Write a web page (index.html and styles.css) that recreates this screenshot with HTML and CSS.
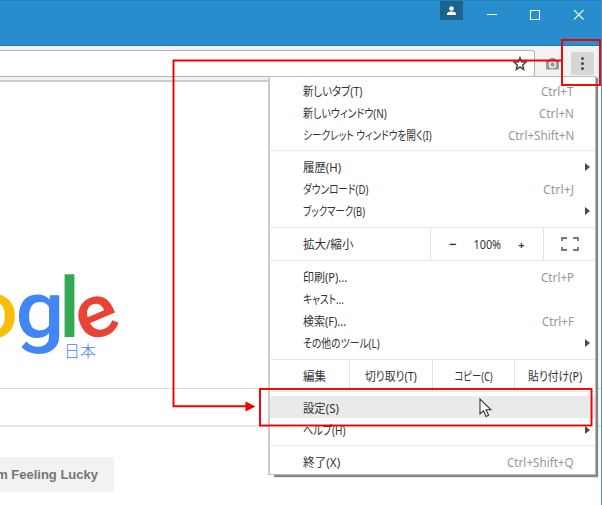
FILE: index.html
```html
<!DOCTYPE html>
<html lang="ja">
<head>
<meta charset="utf-8">
<title>Google</title>
<link rel="stylesheet" href="styles.css">
</head>
<body>
<div class="window">
  <header class="titlebar">
    <div class="user"><svg width="23" height="20"><circle cx="11.5" cy="7.5" r="2.3"/><path d="M7 14v-1.4c0-1.5 2-2.2 4.5-2.2s4.500.7 4.500 2.200V14z"/></svg></div>
    <svg class="controls" width="102" height="28"><path d="M4 14.500h10M47.500 10.500h9v9h-9zM91 10l9.500 9.500M100.500 10L91 19.500"/></svg>
  </header>
  <div class="toolbar">
    <div class="omnibox"><svg width="16" height="16" viewBox="0 0 16 16"><path d="M8 1.800l1.650 4.050 4.350.35-3.300 2.850 1 4.250L8 11l-3.700 2.300 1-4.250L2 6.200l4.350-.35z"/></svg></div>
    <svg class="camera" width="16" height="14"><path d="M1 3h3l1.500-2h4L11 3h3v9.500H1z" fill="#979797"/><circle cx="7.500" cy="7.500" r="3" fill="none" stroke="#f2f2f2" stroke-width="1.600"/></svg>
    <div class="more"><i></i><i></i><i></i></div>
  </div>
  <main class="page">
    <svg class="logo" width="140" height="100">
      <text x="-30" y="67" fill="#fbbc05" textLength="48" lengthAdjust="spacingAndGlyphs">o</text>
      <text x="15.500" y="67" fill="#4285f4" textLength="49" lengthAdjust="spacingAndGlyphs">g</text>
      <text class="ell" x="59" y="67" fill="#34a853" textLength="21" lengthAdjust="spacingAndGlyphs">l</text>
      <text class="e" x="-21.500" y="20.500" fill="#ea4335" textLength="42" lengthAdjust="spacingAndGlyphs" transform="translate(97 46.500) rotate(-23)">e</text>
      <text class="country" x="64" y="87" fill="#4285f4">日本</text>
    </svg>
    <div class="search"></div>
    <div class="lucky">I'm Feeling Lucky</div>
  </main>
</div>

<nav class="menu">
  <div class="group">
    <div class="item"><span data-w="59">新しいタブ(T)</span><kbd data-w="33">Ctrl+T</kbd></div>
    <div class="item"><span data-w="84">新しいウィンドウ(N)</span><kbd data-w="35">Ctrl+N</kbd></div>
    <div class="item"><span data-w="129">シークレット ウィンドウを開く(I)</span><kbd data-w="66">Ctrl+Shift+N</kbd></div>
  </div>
  <div class="group">
    <div class="item sub"><span data-w="38">履歴(H)</span></div>
    <div class="item"><span data-w="65">ダウンロード(D)</span><kbd data-w="31">Ctrl+J</kbd></div>
    <div class="item sub"><span data-w="62">ブックマーク(B)</span></div>
  </div>
  <div class="strip zoom">
    <div class="name"><span data-w="50">拡大/縮小</span></div>
    <div class="level"><b>−</b><span data-w="28">100%</span><b class="plus">+</b></div>
    <div class="full"><svg width="18" height="14"><path d="M1 4V1h5M12 1h5v3M17 10v3h-5M6 13H1v-3"/></svg></div>
  </div>
  <div class="group">
    <div class="item"><span data-w="44">印刷(P)...</span><kbd data-w="33">Ctrl+P</kbd></div>
    <div class="item"><span data-w="41">キャスト...</span></div>
    <div class="item"><span data-w="43">検索(F)...</span><kbd data-w="32">Ctrl+F</kbd></div>
    <div class="item sub"><span data-w="77">その他のツール(L)</span></div>
  </div>
  <div class="strip edit">
    <div class="name"><span data-w="23">編集</span></div>
    <div><span data-w="52">切り取り(T)</span></div>
    <div><span data-w="38">コピー(C)</span></div>
    <div><span data-w="54">貼り付け(P)</span></div>
  </div>
  <div class="group lowered">
    <div class="item active"><span data-w="36">設定(S)</span></div>
    <div class="item sub"><span data-w="43">ヘルプ(H)</span></div>
  </div>
  <div class="group last">
    <div class="item"><span data-w="37">終了(X)</span><kbd data-w="67">Ctrl+Shift+Q</kbd></div>
  </div>
</nav>

<svg class="annotation" width="602" height="505">
  <rect x="562" y="40" width="38" height="45"/>
  <path d="M562 60.500H173.500V406.200H246"/>
  <rect x="260" y="389" width="331.500" height="36.500"/>
  <path class="head" d="M245.500 401.500L255.500 406.500L245.500 411.500z"/>
  <path class="cursor" d="M480 399v15l3.600-3.300 2.500 5.700 2.500-1.100-2.500-5.500h4.800z"/>
</svg>
<script src="fit.js"></script>
</body>
</html>
```
FILE: styles.css
```css
* { box-sizing: border-box; }
body { margin: 0; width: 602px; height: 505px; overflow: hidden; position: relative; background: #fff; font-family: "Noto Sans", "Noto Sans CJK JP", sans-serif; }
svg { display: block; }
.window { width: 602px; height: 505px; border-right: 1px solid #4a91c5; display: flex; flex-direction: column; overflow: hidden; }
.titlebar { height: 46px; flex: none; background: #288dcc; border-top: 1px solid #247fb8; border-bottom: 1px solid #257bb0; margin-right: -1px; display: flex; align-items: flex-start; padding-left: 440px; }
.user { width: 23px; height: 19px; background: #1c638f; }
.user svg { fill: #fff; }
.controls { margin: -1px 0 0 20px; fill: none; stroke: #e9f4fb; stroke-width: 1.1; }
.toolbar { height: 36px; flex: none; background: #f2f2f2; border-bottom: 2px solid #cdcdcd; display: flex; align-items: flex-start; padding-top: 4px; }
.omnibox { width: 535px; height: 27px; background: #fff; border: 1px solid #b3b3b3; border-left: 0; border-radius: 0 3px 3px 0; padding: 5px 6px 0 0; display: flex; justify-content: flex-end; }
.omnibox svg { fill: none; stroke: #484848; stroke-width: 1.5; }
.camera { margin: 7px 0 0 10px; }
.more { width: 23px; height: 23px; margin: 2px 0 0 10px; background: #d6d6d6; border-radius: 2px; display: flex; flex-direction: column; align-items: center; justify-content: center; gap: 2px; }
.more i { width: 3px; height: 3px; border-radius: 50%; background: #484848; }
.page { flex: 1; padding-top: 188px; }
.logo { font: 500 79px Roboto, sans-serif; }
.logo .ell { font-size: 83px; }
.logo .e { font-size: 75px; }
.logo .country { font: 300 16px "Noto Sans CJK JP", sans-serif; }
.search { height: 39px; margin-top: 18px; border-top: 1px solid #dcdcdc; border-bottom: 2px solid #e6e6e6; }
.lucky { width: 114px; height: 35px; margin-top: 30px; padding-right: 16px; background: #f2f2f2; border-radius: 0 2px 2px 0; overflow: hidden; display: flex; justify-content: flex-end; align-items: center; white-space: nowrap; color: #757575; font: bold 13px "Liberation Sans", sans-serif; }
.menu { position: absolute; left: 268px; top: 76px; width: 328px; height: 399px; background: #fff; border: 1px solid #bcbcbc; border-left: 2px solid #ccc; box-shadow: 2px 2px 1px #858585; font-size: 12px; color: #333; clip-path: polygon(0 0, 334px 0, 334px 405px, 6px 405px, 6px 399px, 0 399px); }
.menu span, .menu kbd { display: inline-block; white-space: nowrap; flex: none; font-feature-settings: "palt"; }
.group { padding: 4px 0 5px; border-bottom: 1px solid #eaeaea; }
.zoom + .group, .group + .group { padding-top: 5px; }
.menu > .group:first-child { padding: 3px 0 4px; }
.item { height: 22px; padding: 0 21px 0 33px; display: flex; align-items: center; justify-content: space-between; position: relative; }
.item > span { transform-origin: left; }
.item kbd { font-family: inherit; color: #999890; transform-origin: right; }
.item.sub { padding-right: 5px; }
.lowered .item { padding-top: 2px; }
.sub::after { content: ""; border: 4px solid transparent; border-left: 5px solid #4a4a4a; border-right: 0; }
.active { background: #eaeaea; }
.strip { height: 33px; display: grid; border-bottom: 1px solid #eaeaea; }
.strip > div { display: flex; align-items: center; justify-content: center; border-left: 1px solid #e2e2e2; min-width: 0; }
.strip .name { justify-content: flex-start; padding-left: 33px; border: 0; }
.name span { transform-origin: left; }
.zoom { grid-template-columns: 160px 113px 1fr; }
.level b { font-size: 13px; width: 12px; text-align: center; }
.level { gap: 13px; }
.level .plus { font-size: 11px; }
.full svg { fill: none; stroke: #787878; stroke-width: 1.8; }
.strip.edit { height: 32px; grid-template-columns: 79px 83px 82px 1fr; }
.last { border: 0; padding-bottom: 0; }
.annotation { position: absolute; left: 0; top: 0; fill: none; stroke: #f00000; stroke-width: 1.9; }
.annotation .head { fill: #f00000; stroke: none; }
.annotation .cursor { fill: #fff; stroke: #333; stroke-width: 1.1; }
```
FILE: fit.js
```js
document.querySelectorAll("[data-w]").forEach(function (label) {
  label.style.transform = "scaleX(" + label.dataset.w / label.offsetWidth + ")";
});
```
